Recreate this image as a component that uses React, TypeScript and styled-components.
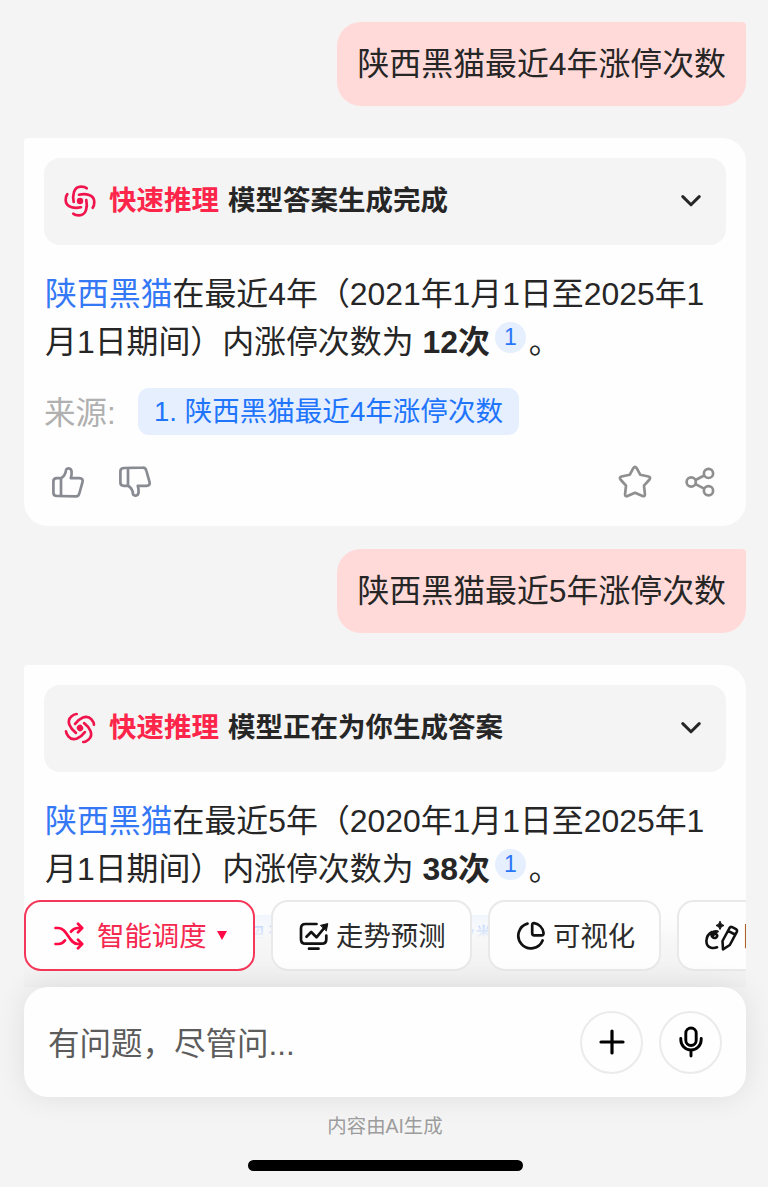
import React from "react";
import styled, { createGlobalStyle } from "styled-components";

const GlobalStyle = createGlobalStyle`
  * { box-sizing: border-box; }
  body {
    margin: 0;
    background: #f4f4f4;
    font-family: "Liberation Sans", "Noto Sans CJK SC", sans-serif;
    color: #262626;
  }
  svg { display: block; flex: none; }
`;

const Screen = styled.div`
  position: relative;
  width: 768px;
  height: 1187px;
  overflow: hidden;
  background: #f4f4f4;
`;

const Conversation = styled.main`
  display: flex;
  flex-direction: column;
  padding: 22px 22px 0 24px;
`;

const Question = styled.div`
  align-self: flex-end;
  height: 84px;
  padding: 0 20px;
  margin-bottom: 32px;
  border-radius: 24px 4px 24px 24px;
  background: #ffdad9;
  font-size: 31.9px;
  line-height: 84px;
  white-space: nowrap;
`;

const Card = styled.section`
  height: 388px;
  margin-bottom: 23px;
  padding: 20px 20px 0;
  border-radius: 4px 24px 24px 24px;
  background: #fefefe;
`;

const Status = styled.header`
  display: flex;
  align-items: center;
  height: 87px;
  padding: 0 25px 2px 20px;
  border-radius: 16px;
  background: #f4f4f4;
  font-size: 27.5px;
  font-weight: 700;
`;

const Mode = styled.span`
  margin: 0 9px 0 13px;
  padding-bottom: 5px;
  color: #fd2549;
`;

const StatusText = styled.span`
  flex: 1;
  padding-bottom: 5px;
`;

const Answer = styled.p`
  margin: 26px -10px 0 1px;
  font-size: 31.9px;
  line-height: 47.5px;
  white-space: nowrap;
`;

const Stock = styled.span`
  color: #3478f6;
`;

const Cite = styled.sup`
  display: inline-block;
  width: 31px;
  height: 31px;
  margin: 0 3px 0 5px;
  border-radius: 50%;
  background: #e5effe;
  color: #2a76f8;
  font-size: 23px;
  line-height: 31px;
  text-align: center;
  vertical-align: 8px;
`;

const SourceRow = styled.div`
  display: flex;
  align-items: center;
  height: 47px;
  margin-top: 22px;
`;

const SourceLabel = styled.span`
  width: 94px;
  padding-bottom: 4px;
  color: #b0b0b0;
  font-size: 31.5px;
`;

const SourceChip = styled.span`
  height: 47px;
  padding: 0 16px;
  border-radius: 11px;
  background: #e5effe;
  color: #1f75fc;
  font-size: 27.55px;
  line-height: 47px;
  white-space: nowrap;
`;

const Actions = styled.div`
  display: flex;
  align-items: center;
  justify-content: space-between;
  height: 36px;
  margin-top: 29px;
  padding: 0 11px 0 6px;
`;

const ActionGroup = styled.div<{ $gap: number }>`
  display: flex;
  align-items: center;
  gap: ${(p) => p.$gap}px;
`;

const Dock = styled.footer`
  position: absolute;
  left: 0;
  right: 0;
  bottom: 0;
  height: 297px;
`;

const Tools = styled.div`
  display: flex;
  gap: 16px;
  height: 97px;
  margin: 0 22px 0 24px;
  padding-top: 10px;
  overflow: hidden;
  background: linear-gradient(
    to bottom,
    rgba(254, 254, 254, 0) 0%,
    rgba(253, 253, 253, 0.5) 26%,
    rgba(251, 251, 251, 0.78) 38%,
    rgba(247, 247, 247, 1) 51%,
    #f0f0f0 100%
  );
`;

const Tool = styled.button<{ $active?: boolean; $width: number }>`
  display: flex;
  flex: none;
  align-items: center;
  width: ${(p) => p.$width}px;
  height: 71px;
  padding: 0 0 0 ${(p) => (p.$active ? 27 : 26)}px;
  border: 2px solid ${(p) => (p.$active ? "#f5385a" : "#e9e9e9")};
  border-radius: 17px;
  background: #fefefe;
  color: ${(p) => (p.$active ? "#f5294f" : "#2b2b2b")};
  font: 27.4px "Liberation Sans", "Noto Sans CJK SC", sans-serif;
  white-space: nowrap;
`;

const ToolLabel = styled.span<{ $gap: number }>`
  margin-left: ${(p) => p.$gap}px;
  padding-bottom: 4px;
`;

const Triangle = styled.span`
  margin-left: 10px;
  border: solid transparent;
  border-width: 9px 5.5px 0;
  border-top-color: #ff0a45;
`;

const Base = styled.div`
  display: flex;
  flex-direction: column;
  align-items: center;
  height: 200px;
  padding: 0 22px 0 24px;
  background: #f4f4f4;
`;

const Composer = styled.div`
  display: flex;
  align-items: center;
  width: 100%;
  height: 110px;
  padding: 0 24px;
  border-radius: 24px;
  background: #fefefe;
  box-shadow: 0 0 30px rgba(0, 0, 0, 0.09);
`;

const Placeholder = styled.span`
  flex: 1;
  padding-bottom: 3px;
  color: #5c5c5c;
  font-size: 31.5px;
`;

const RoundButton = styled.button`
  display: flex;
  align-items: center;
  justify-content: center;
  width: 63px;
  height: 63px;
  margin-left: 16px;
  padding: 0;
  border: 2px solid #ebebeb;
  border-radius: 50%;
  background: #fefefe;
`;

const Notice = styled.small`
  margin-top: 14px;
  color: #9c9c9c;
  font-size: 19.4px;
  line-height: 30px;
`;

const HomeBar = styled.div`
  width: 275px;
  height: 11px;
  margin-top: 19px;
  border-radius: 6px;
  background: #000;
`;

const Swirl = ({ angle = 0 }: { angle?: number }) => (
  <svg width="32" height="32" viewBox="-16 -16 32 32" fill="none" stroke="#f0144c" strokeWidth="2.7" strokeLinecap="round">
    <g transform={`rotate(${angle})`}>
      {[0, 90, 180, 270].map((a) => (
        <path key={a} transform={`rotate(${a})`} d="M-6.3 1C-7.6-5.5-6.6-14.3 1-14.3Q5-14.3 6.7-12.7" />
      ))}
      <circle r="3.2" fill="#f0144c" stroke="none" />
    </g>
  </svg>
);

const Chevron = () => (
  <svg width="20" height="12" viewBox="0 0 20 12" fill="none" stroke="#262626" strokeWidth="3" strokeLinecap="round" strokeLinejoin="round">
    <path d="M1.8 1.6 10 9.8l8.2-8.2" />
  </svg>
);

const ThumbUp = () => (
  <svg width="36" height="36" viewBox="0 0 36 36" fill="none" stroke="#898b93" strokeWidth="2.7" strokeLinejoin="round" strokeLinecap="round">
    <path d="M11 14.2c3.5-1.8 4.6-4.5 5-8 .2-2.5 5.2-2.8 5.6 1.5.2 2.5-.2 4.5-.8 6.5h8.7c2.6 0 3.7 1.7 3 4l-3.2 11.3c-.5 2-1.8 3-3.7 2.9L7.2 32c-2.2 0-3.8-1-3.8-3.3V17.5c0-2.2 1.4-3.3 3.5-3.3zM11 14.2V32" />
  </svg>
);

const ThumbDown = () => (
  <svg width="36" height="36" viewBox="0 0 36 36" fill="none" stroke="#898b93" strokeWidth="2.7" strokeLinejoin="round" strokeLinecap="round">
    <path d="M11 21.8c3.5 1.8 4.6 4.5 5 8 .2 2.5 5.2 2.8 5.6-1.5.2-2.5-.2-4.5-.8-6.5h8.700c2.600 0 3.700-1.700 3-4L29.300 6.500c-.5-2-1.800-3-3.700-2.900L7.200 4c-2.200 0-3.800 1-3.800 3.300v11.200c0 2.200 1.400 3.300 3.500 3.300zM11 21.800V4" />
  </svg>
);

const Star = () => (
  <svg width="36" height="36" viewBox="0 0 36 36" fill="none" stroke="#8f8f8f" strokeWidth="2.7" strokeLinejoin="round">
    <path d="M16.3 4.2q1.7-2.6 3.4 0l3.5 6.5 8.3 1.8q2.6.9 1 3l-5.5 6.2.9 8.5q.1 2.6-2.4 1.9L18 28.8l-7.5 3.3q-2.5.7-2.4-1.9l.9-8.5-5.500-6.200q-1.600-2.100 1-3l8.300-1.800z" />
  </svg>
);

const Share = () => (
  <svg width="30" height="30" viewBox="0 0 30 30" fill="none" stroke="#8f8f8f" strokeWidth="2.7">
    <circle cx="6.2" cy="15" r="4.6" />
    <circle cx="23.5" cy="6.4" r="4.6" />
    <circle cx="23.5" cy="23.7" r="4.6" />
    <path d="m10.5 13 8.7-4.5M10.5 17.1l8.7 4.5" />
  </svg>
);

const Shuffle = () => (
  <svg width="32" height="28" viewBox="0 0 32 28" fill="none" stroke="#ff0a45" strokeWidth="2.7" strokeLinecap="round" strokeLinejoin="round">
    <path d="M2.5 6h3C14.5 6 15.5 22 25 22h4M2.5 22h3c3 0 5-1.5 6.5-3.7M18 9.7c1.8-2.3 4-3.7 7-3.7h4M25 1.8 29.2 6 25 10.2M25 17.8l4.2 4.2-4.2 4.2" />
  </svg>
);

const Trend = () => (
  <svg width="30" height="30" viewBox="0 0 30 30" fill="none" stroke="#111" strokeWidth="2.7" strokeLinecap="round" strokeLinejoin="round">
    <path d="M17.5 3H6.5Q2 3 2 7.5v10.7q0 4.5 4.5 4.5h16.3q4.5 0 4.5-4.5V14.5M10 27.7h9.5M7.5 15.8l4.7-4.8 5.3 5.3L26 6" />
    <path d="m21.8 4.3 7-1.7-1.4 7z" fill="#111" strokeWidth="1" />
  </svg>
);

const Pie = () => (
  <svg width="30" height="30" viewBox="0 0 30 30" fill="none" stroke="#111" strokeWidth="2.7" strokeLinecap="round" strokeLinejoin="round">
    <path d="M11.5 2.6A12.6 12.6 0 1 0 26.6 19.5M16.2 4q0-2 2-1.8a11.5 11.5 0 0 1 9.3 9.5q.2 2.6-1.8 2.6h-7.5q-2 0-2-2z" />
  </svg>
);

const Draw = () => (
  <svg width="34" height="30" viewBox="0 0 34 30" fill="none" stroke="#111" strokeWidth="2.6" strokeLinecap="round" strokeLinejoin="round">
    <path d="M12.5 10.5C7 9.5 5.5 14 7.500 16c2 2 5.500.5 4.500-2-1-2-4-1-4.500 2M7 11C0 14.500-.5 25 6 26.700q3 .8 6-.4" />
    <path d="m17.5 20 7-13q1-1.700 2.700-.8l3.800 2q1.500 1 .8 2.600l-7 13.200-6.800 4.300zM23 9.800l7 3.700" />
    <path d="M15 .5Q15.700 3.800 19 4.500 15.700 5.200 15 8.500 14.300 5.200 11 4.500 14.300 3.800 15 .5z" fill="#111" strokeWidth="1" />
  </svg>
);

const Plus = () => (
  <svg width="26" height="26" viewBox="0 0 26 26" stroke="#000" strokeWidth="3.2" strokeLinecap="round">
    <path d="M13 2v22M2 13h22" />
  </svg>
);

const Mic = () => (
  <svg width="26" height="32" viewBox="0 0 26 32" fill="none" stroke="#000" strokeWidth="2.9" strokeLinecap="round">
    <rect x="7.8" y="2" width="10.4" height="17.5" rx="5.2" />
    <path d="M2.8 12.5v1.2a10.2 10.2 0 0 0 20.4 0v-1.2M13 24v6" />
  </svg>
);

type Reply = { years: number; from: number; count: number; status: string; angle: number };

const replies: Reply[] = [
  { years: 4, from: 2021, count: 12, status: "模型答案生成完成", angle: 0 },
  { years: 5, from: 2020, count: 38, status: "模型正在为你生成答案", angle: -41 },
];

const ReplyBlock = ({ years, from, count, status, angle }: Reply) => (
  <>
    <Question>陕西黑猫最近{years}年涨停次数</Question>
    <Card>
      <Status>
        <Swirl angle={angle} />
        <Mode>快速推理</Mode>
        <StatusText>{status}</StatusText>
        <Chevron />
      </Status>
      <Answer>
        <Stock>陕西黑猫</Stock>在最近{years}年（{from}年1月1日至2025年1
        <br />
        月1日期间）内涨停次数为 <b>{count}次</b>
        <Cite>1</Cite>。
      </Answer>
      <SourceRow>
        <SourceLabel>来源:</SourceLabel>
        <SourceChip>1. 陕西黑猫最近{years}年涨停次数</SourceChip>
      </SourceRow>
      <Actions>
        <ActionGroup $gap={31}>
          <ThumbUp />
          <ThumbDown />
        </ActionGroup>
        <ActionGroup $gap={32}>
          <Star />
          <Share />
        </ActionGroup>
      </Actions>
    </Card>
  </>
);

export default function App() {
  return (
    <>
      <GlobalStyle />
      <Screen>
        <Conversation>
          {replies.map((r) => (
            <ReplyBlock key={r.years} {...r} />
          ))}
        </Conversation>
        <Dock>
          <Tools>
            <Tool $active $width={231}>
              <Shuffle />
              <ToolLabel $gap={12}>智能调度</ToolLabel>
              <Triangle />
            </Tool>
            <Tool $width={201}>
              <Trend />
              <ToolLabel $gap={7}>走势预测</ToolLabel>
            </Tool>
            <Tool $width={173}>
              <Pie />
              <ToolLabel $gap={7}>可视化</ToolLabel>
            </Tool>
            <Tool $width={173}>
              <Draw />
              <ToolLabel $gap={4}>图文</ToolLabel>
            </Tool>
          </Tools>
          <Base>
            <Composer>
              <Placeholder>有问题，尽管问...</Placeholder>
              <RoundButton aria-label="添加">
                <Plus />
              </RoundButton>
              <RoundButton aria-label="语音">
                <Mic />
              </RoundButton>
            </Composer>
            <Notice>内容由AI生成</Notice>
            <HomeBar />
          </Base>
        </Dock>
      </Screen>
    </>
  );
}
